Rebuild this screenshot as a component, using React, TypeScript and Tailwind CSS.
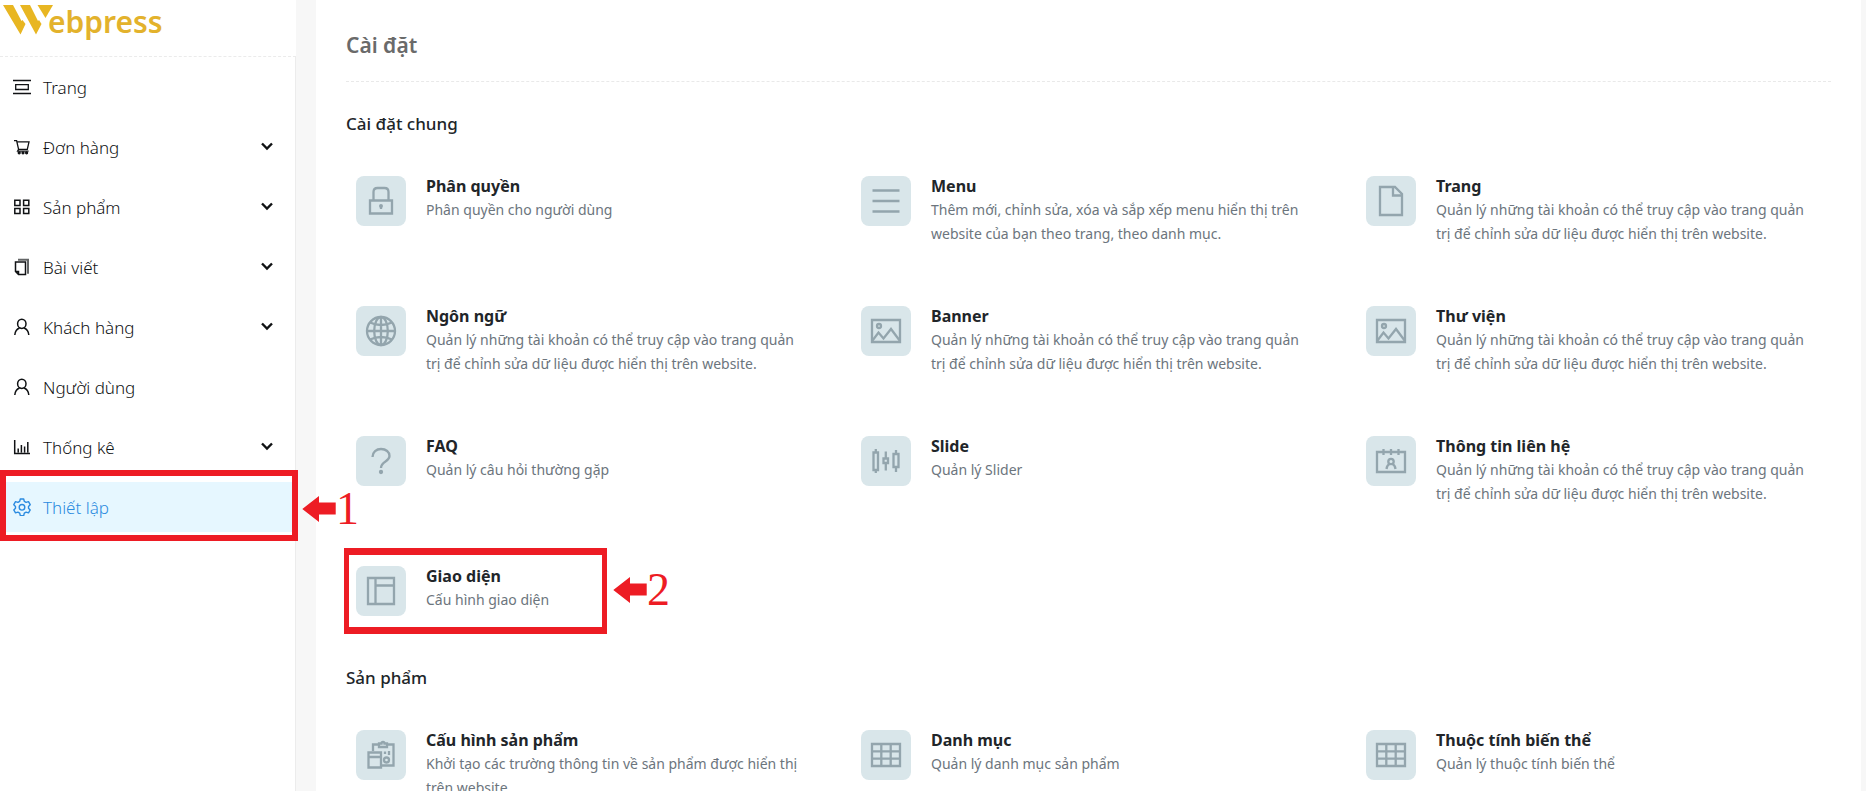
import type { ReactNode } from "react";

type IconProps = { name: string; className: string };

// Drawn on an 18px grid, for the sidebar
const shapes: Record<string, ReactNode> = {
  page: (
    <>
      <path d="M0 2.5h18M0 15.5h18" strokeWidth="1.4" />
      <path d="M2.7 6.7h12.6v4.8H2.7z" />
    </>
  ),
  cart: (
    <>
      <path d="M1 2.7h2.6l2 8.600h8.700L16 3.800H4" />
      <path d="M5.600 11.300l-1 1.800h11" />
      <circle cx="6.200" cy="14.800" r="1" fill="currentColor" />
      <circle cx="10" cy="14.800" r="1" fill="currentColor" />
      <circle cx="13.600" cy="14.800" r="1" fill="currentColor" />
    </>
  ),
  tiles: (
    <path d="M1.8 2.2h5.2v5.2H1.8zM10.6 2.2h5.2v5.2h-5.2zM1.8 10.4h5.2v5.2H1.8zM10.6 10.4h5.2v5.2h-5.2z" strokeWidth="1.5" />
  ),
  copy: (
    <>
      <path d="M2.500 4h10v12.500H5.500l-3-3zM5.500 16.500v-3h-3" strokeWidth="1.500" />
      <path d="M5 1.800h10v14" strokeWidth="2" strokeOpacity=".65" />
    </>
  ),
  user: (
    <>
      <ellipse cx="8.8" cy="5.8" rx="4.2" ry="4.6" strokeWidth="1.5" />
      <path d="M1.8 17c.3-3.4 1.8-6 4.8-7M15.8 17c-.3-3.4-1.8-6-4.8-7" strokeWidth="1.5" />
    </>
  ),
  chart: (
    <path d="M1.7 2v13.4H17M5.2 14.5v-4M8.4 14.5V7M11.6 14.5V8.5M14.8 14.5V4" strokeWidth="1.5" />
  ),
  gear: (
    <>
      <path
        d="M7.300 1h3.400l.6 2.400 1.800 1 2.400-.7 1.700 3-1.700 1.700v1.800l1.700 1.700-1.700 3-2.400-.7-1.800 1-.6 2.400H7.300l-.6-2.400-1.800-1-2.400.7-1.700-3 1.700-1.700V8.400L.8 6.700l1.700-3 2.400.7 1.800-1z"
        strokeWidth="1.400"
        strokeLinejoin="round"
      />
      <circle cx="9" cy="9.300" r="2.800" strokeWidth="1.400" />
    </>
  ),
};

// Drawn on a 50px grid, for the settings tiles
const tileShapes: Record<string, ReactNode> = {
  lock: (
    <>
      <path d="M14 24.500h22v13H14z" />
      <path d="M17.500 24v-8q0-4 4-4h7q4 0 4 4v8" />
      <path d="M25 29v4" />
      <circle cx="25" cy="30" r=".8" />
    </>
  ),
  menu: <path d="M11.500 14.500h27M11.500 25h27M11.500 35.500h27" />,
  file: (
    <>
      <path d="M14 11h15l7 7v21H14z" />
      <path d="M27 11v8.500h9" />
    </>
  ),
  globe: (
    <>
      <circle cx="25" cy="25" r="14" />
      <ellipse cx="25" cy="25" rx="6.800" ry="14" />
      <path d="M25 11v28M11 25h28M14 16.500q11 5 22 0M14 33.500q11-5 22 0" />
    </>
  ),
  image: (
    <>
      <path d="M11 14h28v22H11z" />
      <circle cx="18" cy="20" r="2" />
      <path d="M11.500 34.500l6-8 5 6 7.500-9.500 9 12" />
    </>
  ),
  question: (
    <>
      <path d="M16.500 21c0-5 4-8 8.500-8 5 0 8.500 3 8.500 7 0 6-8.500 5-8.500 12" />
      <circle cx="25" cy="36" r="1" fill="currentColor" />
    </>
  ),
  sliders: (
    <>
      <path d="M12.500 16.500h4.500v17.500h-4.500zM14.800 13v3M14.800 34v3" />
      <path d="M22.500 22.500h4.500v4.500h-4.500zM24.800 15.500v7M24.800 27v7.500" />
      <path d="M32.500 18h5v13h-5zM35 14v4M35 31v5" />
    </>
  ),
  contact: (
    <>
      <path d="M11 16h28v20H11zM17.500 13v6M25 13v6M32.500 13v6" />
      <circle cx="25" cy="25.500" r="2.700" />
      <path d="M20.500 33c.3-2.500 1.500-4.300 3-5M29.500 33c-.3-2.500-1.500-4.300-3-5" />
    </>
  ),
  layout: <path d="M12 12h26v26H12zM19.500 12v26M19.500 19.500H38" />,
  product: (
    <>
      <path d="M17 21v-6.500h6v2.500h8v-2.500h6.500v21H26M23 15v-1.500h2.500c0-2 3-2 3 0H31V15" />
      <path d="M12.500 22.500H25v15H12.500zM12.500 27H25" />
      <circle cx="30.500" cy="30" r="2.500" />
      <path d="M29 21.500v2.500M33 21v4" />
    </>
  ),
  table: <path d="M11 14h28v22H11zM11 21.300h28M11 28.700h28M20.300 14v22M29.700 14v22" />,
};

function NavIcon({ name, className }: IconProps) {
  return (
    <svg viewBox="0 0 18 18" className={className} fill="none" stroke="currentColor" strokeWidth="1.300" aria-hidden="true">
      {shapes[name]}
    </svg>
  );
}

function TileIcon({ name }: { name: string }) {
  return (
    <span className="size-[50px] shrink-0 rounded-lg bg-[#d9e6ea] text-[#93a5ad]">
      <svg viewBox="0 0 50 50" className="size-full" fill="none" stroke="currentColor" strokeWidth="2.300" aria-hidden="true">
        {tileShapes[name]}
      </svg>
    </span>
  );
}

const nav = [
  { label: "Trang", icon: "page", more: false },
  { label: "Đơn hàng", icon: "cart", more: true },
  { label: "Sản phẩm", icon: "tiles", more: true },
  { label: "Bài viết", icon: "copy", more: true },
  { label: "Khách hàng", icon: "user", more: true },
  { label: "Người dùng", icon: "user", more: false },
  { label: "Thống kê", icon: "chart", more: true },
  { label: "Thiết lập", icon: "gear", more: false, active: true },
];

const account =
  "Quản lý những tài khoản có thể truy cập vào trang quản trị để chỉnh sửa dữ liệu được hiển thị trên website.";

const sections = [
  {
    title: "Cài đặt chung",
    items: [
      { title: "Phân quyền", text: "Phân quyền cho người dùng", icon: "lock" },
      {
        title: "Menu",
        text: "Thêm mới, chỉnh sửa, xóa và sắp xếp menu hiển thị trên website của bạn theo trang, theo danh mục.",
        icon: "menu",
      },
      { title: "Trang", text: account, icon: "file" },
      { title: "Ngôn ngữ", text: account, icon: "globe" },
      { title: "Banner", text: account, icon: "image" },
      { title: "Thư viện", text: account, icon: "image" },
      { title: "FAQ", text: "Quản lý câu hỏi thường gặp", icon: "question" },
      { title: "Slide", text: "Quản lý Slider", icon: "sliders" },
      { title: "Thông tin liên hệ", text: account, icon: "contact" },
      { title: "Giao diện", text: "Cấu hình giao diện", icon: "layout", step: "2" },
    ],
  },
  {
    title: "Sản phẩm",
    items: [
      {
        title: "Cấu hình sản phẩm",
        text: "Khởi tạo các trường thông tin về sản phẩm được hiển thị trên website.",
        icon: "product",
      },
      { title: "Danh mục", text: "Quản lý danh mục sản phẩm", icon: "table" },
      { title: "Thuộc tính biến thể", text: "Quản lý thuộc tính biến thể", icon: "table" },
    ],
  },
];

function StepMark({ step }: { step: string }) {
  return (
    <span className="flex items-center text-[#ed1c24]">
      <svg viewBox="0 0 36 28" className="h-[26px] w-[34px]" fill="currentColor" aria-hidden="true">
        <path d="M0 14 18 0v7h18v13H18v8z" />
      </svg>
      <span className="font-['Liberation_Serif',serif] text-[46px] leading-[46px]">{step}</span>
    </span>
  );
}

function Sidebar() {
  return (
    <aside className="w-[296px] shrink-0 bg-white">
      <a href="#" aria-label="Webpress" className="flex h-[57px] items-start border-b border-dashed border-[#ebebeb] text-[#e3b22c]">
        <svg viewBox="0 0 54 36" className="h-9 w-[54px] shrink-0" fill="#e8b622" aria-hidden="true">
          <path d="M3 5h10l8.500 16 1-1 3 4-5 10.500z" />
          <path d="M20 5h10l8 16 1-1 2.500 4-5.500 10.500z" />
          <path d="M37.500 5h15.500l-7.500 13z" />
        </svg>
        <span className="-ml-1.5 text-[30px] leading-[44px] font-semibold">ebpress</span>
      </a>
      <nav className="min-h-screen border-r border-[#ececec] pt-[5px]">
        <ul className="flex flex-col gap-[10px]">
          {nav.map((item) => (
            <li key={item.label} className="relative">
              <a
                href="#"
                className={
                  item.active
                    ? "flex h-[50px] items-center gap-3 bg-[#e6f7ff] pr-[21px] pl-[13px] text-[#2b8be0]"
                    : "flex h-[50px] items-center gap-3 pr-[21px] pl-[13px] text-[#101214]"
                }
              >
                <NavIcon name={item.icon} className="size-[18px] shrink-0" />
                <span className="flex-1 pt-0.5 text-[17px] leading-6 font-light">{item.label}</span>
                {item.more && (
                  <svg viewBox="0 0 14 10" className="h-[10px] w-[14px]" fill="none" stroke="currentColor" strokeWidth="2.400" aria-hidden="true">
                    <path d="M2 1.500l5 5 5-5" />
                  </svg>
                )}
              </a>
              {item.active && (
                <>
                  <span className="pointer-events-none absolute -top-3 -right-[3px] -bottom-[9px] left-0 border-6 border-[#ed1c24]" />
                  <span className="absolute top-1 left-full ml-[7px]">
                    <StepMark step="1" />
                  </span>
                </>
              )}
            </li>
          ))}
        </ul>
      </nav>
    </aside>
  );
}

export default function App() {
  return (
    <div className="flex h-screen overflow-hidden bg-[#f7f7f7] font-['Noto_Sans','Open_Sans',sans-serif] text-[#212529]">
      <Sidebar />
      <main className="mr-[5px] ml-5 min-w-0 flex-1 bg-white px-[30px]">
        <h1 className="border-b border-dashed border-[#e9e9e9] pt-[30px] pb-[21px] text-[21px] leading-[30px] font-semibold text-[#6a6a6a]">
          Cài đặt
        </h1>
        <div className="flex flex-col gap-5 pt-[30px]">
          {sections.map((section) => (
            <section key={section.title}>
              <h2 className="mb-[10px] text-[17px] leading-6 font-medium">{section.title}</h2>
              <ul className="-mx-[15px] grid grid-cols-3">
                {section.items.map((item) => (
                  <li key={item.title} className="relative px-[25px] py-[30px]">
                    <a href="#" className="flex gap-5">
                      <TileIcon name={item.icon} />
                      <span className="flex min-w-0 flex-1 flex-col gap-0.5">
                        <strong className="text-base leading-5 font-bold">{item.title}</strong>
                        <span className="text-sm leading-6 text-[#6c757d]">{item.text}</span>
                      </span>
                    </a>
                    {"step" in item && item.step && (
                      <>
                        <span className="pointer-events-none absolute top-3 left-[13px] h-[86px] w-[263px] border-x-5 border-y-7 border-[#ed1c24]" />
                        <span className="absolute top-[31px] left-[282px]">
                          <StepMark step={item.step} />
                        </span>
                      </>
                    )}
                  </li>
                ))}
              </ul>
            </section>
          ))}
        </div>
      </main>
    </div>
  );
}
